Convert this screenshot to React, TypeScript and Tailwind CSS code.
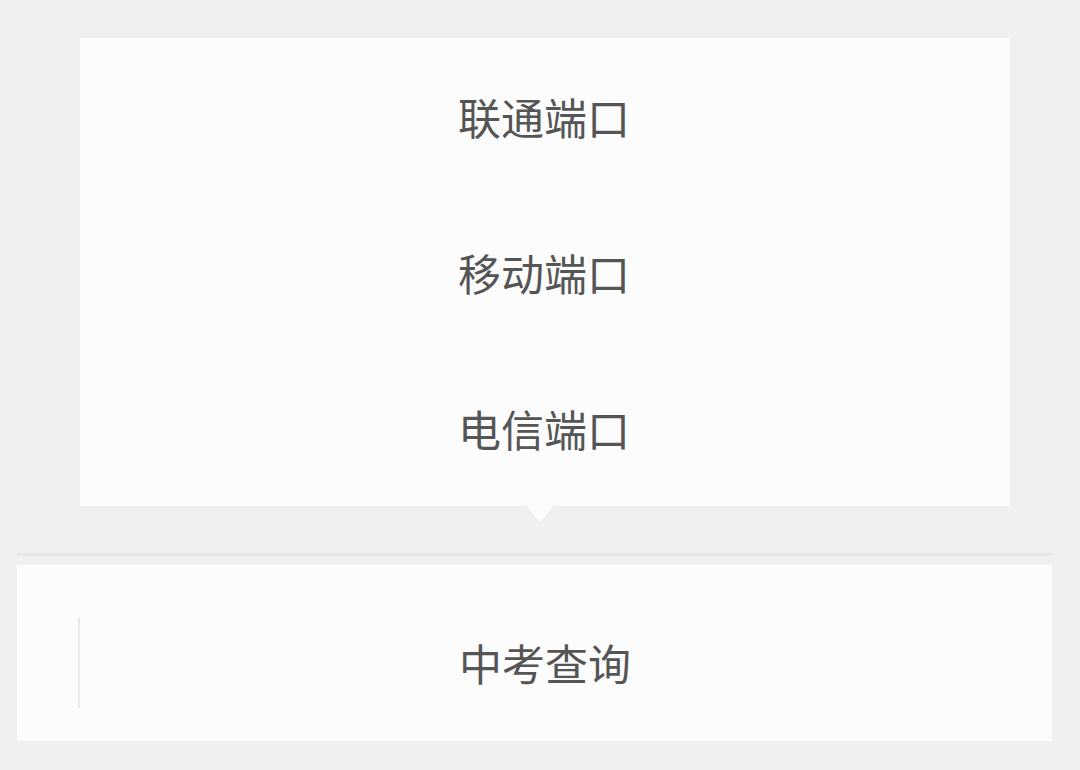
export default function App() {
  const items = ["联通端口", "移动端口", "电信端口"];
  const font = { fontFamily: '"Noto Sans CJK SC", "Noto Sans", sans-serif' };
  return (
    <div className="w-[1080px] h-[770px] bg-[#f0f0f0] overflow-hidden flex flex-col" style={font}>
      {/* popup menu */}
      <div className="mt-[38px] ml-[80px] w-[930px] relative">
        <div className="bg-[#fcfcfc] flex flex-col">
          {items.map((t) => (
            <div key={t} className="h-[156px] flex items-center justify-center text-[43px] leading-none text-[#555555] pr-[2px]">
              {t}
            </div>
          ))}
        </div>
        {/* pointer under the menu */}
        <div className="absolute left-[446px] top-[468px] w-0 h-0 border-l-[14px] border-r-[14px] border-t-[16px] border-l-transparent border-r-transparent border-t-[#fcfcfc]" />
      </div>
      {/* separator */}
      <div className="mt-[47px] ml-[17px] w-[1035px] h-[3px] bg-[#e6e6e6]" />
      {/* bottom menu bar */}
      <div className="mt-[9px] ml-[17px] w-[1035px] h-[176px] bg-[#fcfcfc] flex items-stretch">
        <div className="w-[63px] flex items-center justify-end">
          <div className="w-[2px] h-[90px] bg-[#e8e8e8] mt-[20px]" />
        </div>
        <div className="flex-1 flex items-center justify-center text-[43px] leading-none text-[#555555] pt-[18px] pr-[42px]">
          中考查询
        </div>
      </div>
    </div>
  );
}
